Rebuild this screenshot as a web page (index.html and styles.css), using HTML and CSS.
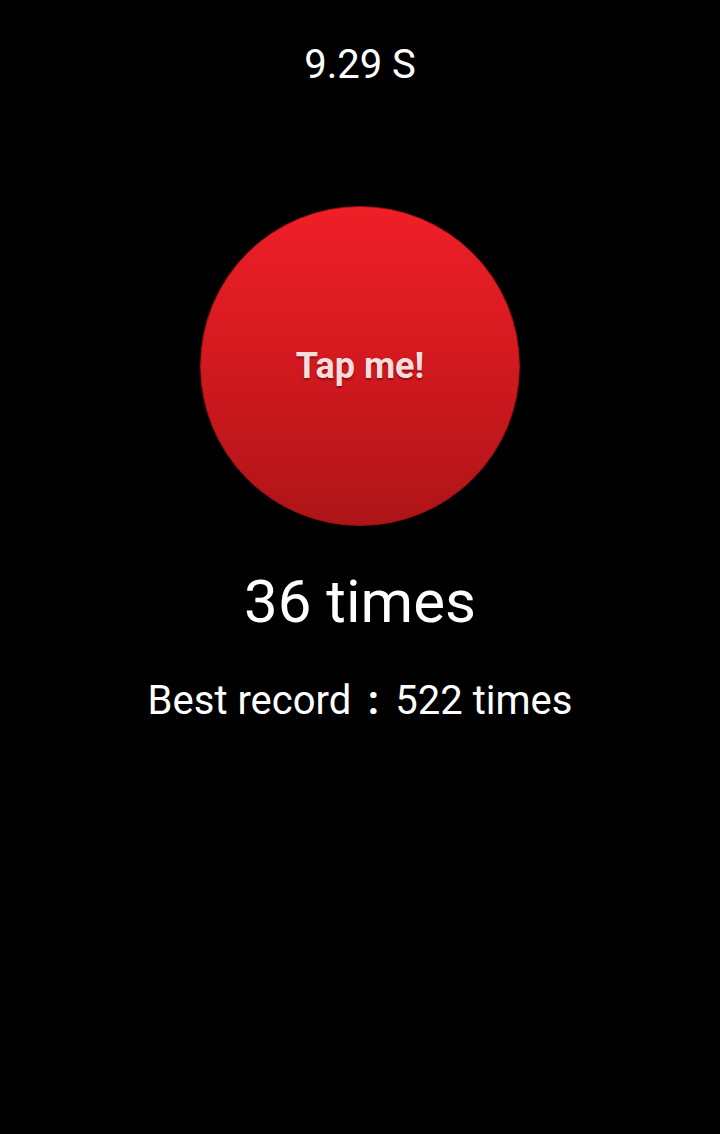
FILE: index.html
```html
<!DOCTYPE html>
<html lang="en">
<head>
<meta charset="utf-8">
<title>Tap me</title>
<link rel="stylesheet" href="styles.css">
</head>
<body>
<main class="screen">
  <div class="timer">9.29 S</div>
  <button class="tap-button" type="button"><span class="tap-label">Tap me!</span></button>
  <div class="count">36 times</div>
  <div class="best">Best record<span class="colon">:</span>522 times</div>
</main>
</body>
</html>
```

FILE: styles.css
```css
html, body {
  margin: 0;
  padding: 0;
  background: #000;
}

body {
  width: 720px;
  height: 1134px;
  overflow: hidden;
  font-family: Roboto, "Noto Sans", "Noto Sans CJK JP", sans-serif;
  color: #fff;
}

.screen {
  display: flex;
  flex-direction: column;
  align-items: center;
  padding-top: 41px;
}

.timer {
  font-size: 40px;
  line-height: 47px;
  height: 47px;
}

.tap-button {
  margin-top: 118px;
  width: 320px;
  height: 320px;
  border-radius: 50%;
  border: 1px solid #9c0f12;
  box-sizing: border-box;
  background: linear-gradient(to bottom, #ef1f27 0%, #d51a20 45%, #ae1418 100%);
  display: flex;
  align-items: center;
  justify-content: center;
  padding: 0;
  cursor: pointer;
}

.tap-label {
  font-family: Roboto, sans-serif;
  font-weight: 700;
  font-size: 36px;
  color: #f7dcdc;
  text-shadow: 0 2px 2px rgba(90, 0, 0, 0.55);
}

.count {
  margin-top: 41px;
  font-size: 60px;
  line-height: 70px;
  height: 70px;
}

.best {
  margin-top: 40px;
  font-size: 40px;
  line-height: 47px;
  height: 47px;
}

.colon {
  display: inline-block;
  width: 44px;
  text-align: center;
  font-weight: 700;
}
```
